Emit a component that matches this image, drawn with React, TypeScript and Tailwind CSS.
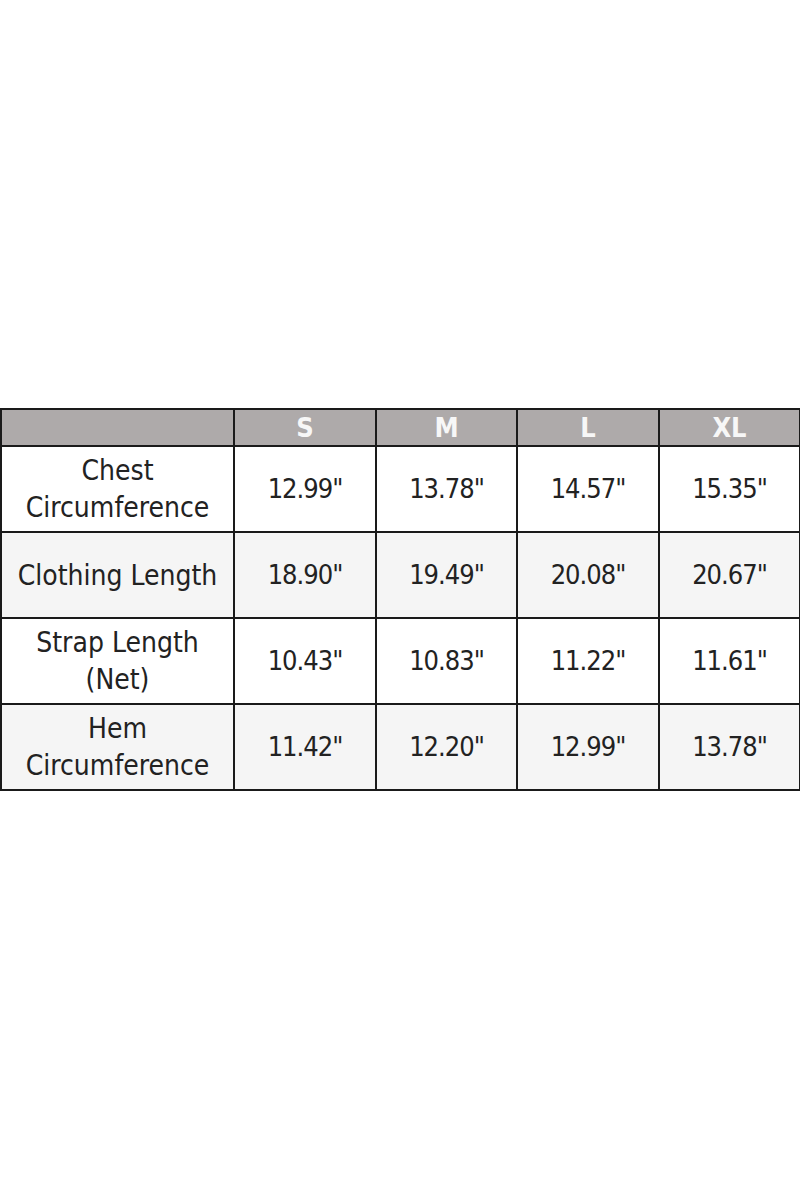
import React from 'react';

const sizes = ['S', 'M', 'L', 'XL'];

const rows: { label: string[]; values: string[] }[] = [
  { label: ['Chest', 'Circumference'], values: ['12.99"', '13.78"', '14.57"', '15.35"'] },
  { label: ['Clothing Length'], values: ['18.90"', '19.49"', '20.08"', '20.67"'] },
  { label: ['Strap Length', '(Net)'], values: ['10.43"', '10.83"', '11.22"', '11.61"'] },
  { label: ['Hem', 'Circumference'], values: ['11.42"', '12.20"', '12.99"', '13.78"'] },
];

const App: React.FC = () => {
  return (
    <div
      className="w-[800px] h-[1200px] bg-white flex items-start pt-[408px]"
      style={{ fontFamily: '"DejaVu Sans Condensed", "Roboto", "Liberation Sans", sans-serif' }}
    >
      <table className="w-[799px] border-collapse border-2 border-[#1a1a1a] table-fixed">
        <colgroup>
          <col className="w-[233px]" />
          <col className="w-[142px]" />
          <col className="w-[141px]" />
          <col className="w-[142px]" />
          <col className="w-[141px]" />
        </colgroup>
        <thead>
          <tr className="h-[37px] bg-[#aeaaaa]">
            <th className="border-2 border-[#1a1a1a]"></th>
            {sizes.map(s => (
              <th key={s} className="border-2 border-[#1a1a1a] text-[#f7f7f7] text-[27px] font-semibold leading-none">
                {s}
              </th>
            ))}
          </tr>
        </thead>
        <tbody>
          {rows.map((row, i) => (
            <tr key={i} className={`h-[86px] ${i % 2 === 1 ? 'bg-[#f5f5f5]' : 'bg-white'}`}>
              <td className="border-2 border-[#1a1a1a] text-center text-[28px] leading-[37px] text-[#222] whitespace-nowrap">
                {row.label.map(l => (
                  <div key={l}>{l}</div>
                ))}
              </td>
              {row.values.map((v, j) => (
                <td key={j} className="border-2 border-[#1a1a1a] text-center text-[27px] tracking-[-1px] text-[#222]">
                  {v}
                </td>
              ))}
            </tr>
          ))}
        </tbody>
      </table>
    </div>
  );
};

export default App;
